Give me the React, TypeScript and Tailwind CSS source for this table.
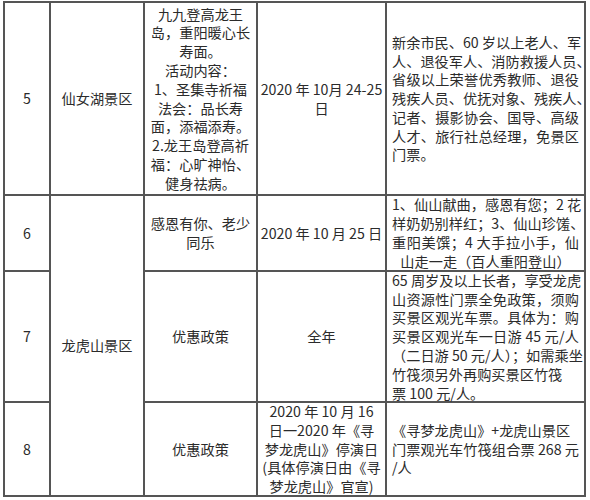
import React from "react";

type Line = { t: string; j?: boolean };

const cell = "bg-white flex flex-col justify-center";
const center = `${cell} items-center text-center`;
const left = `${cell} px-[5px] text-left`;

function Lines({ lines }: { lines: Line[] }) {
  return (
    <>
      {lines.map((l, i) => (
        <div
          key={i}
          className={`whitespace-nowrap ${l.j ? "[text-align-last:justify]" : ""}`}
        >
          {l.t}
        </div>
      ))}
    </>
  );
}

const row5Event: Line[] = [
  { t: "九九登高龙王" },
  { t: "岛，重阳暖心长" },
  { t: "寿面。" },
  { t: "活动内容：" },
  { t: "1、圣集寺祈福" },
  { t: "法会：品长寿" },
  { t: "面，添福添寿。" },
  { t: "2.龙王岛登高祈" },
  { t: "福：心旷神怡、" },
  { t: "健身祛病。" },
];

const row5Who: Line[] = [
  { t: "新余市民、60 岁以上老人、军", j: true },
  { t: "人、退役军人、消防救援人员、", j: true },
  { t: "省级以上荣誉优秀教师、退役", j: true },
  { t: "残疾人员、优抚对象、残疾人、", j: true },
  { t: "记者、摄影协会、国导、高级", j: true },
  { t: "人才、旅行社总经理，免景区", j: true },
  { t: "门票。" },
];

const row6Who: Line[] = [
  { t: "1、仙山献曲，感恩有您；2 花", j: true },
  { t: "样奶奶别样红；3、仙山珍馐、", j: true },
  { t: "重阳美馔；4 大手拉小手，仙", j: true },
  { t: "山走一走（百人重阳登山）" },
];

const row7Who: Line[] = [
  { t: "65 周岁及以上长者，享受龙虎", j: true },
  { t: "山资源性门票全免政策，须购", j: true },
  { t: "买景区观光车票。具体为：购", j: true },
  { t: "买景区观光车一日游 45 元/人", j: true },
  { t: "（二日游 50 元/人）；如需乘坐", j: true },
  { t: "竹筏须另外再购买景区竹筏" },
  { t: "票 100 元/人。" },
];

const row8Date: Line[] = [
  { t: "2020 年 10 月 16" },
  { t: "日一2020 年《寻" },
  { t: "梦龙虎山》停演日" },
  { t: "(具体停演日由《寻" },
  { t: "梦龙虎山》官宣)" },
];

const row8Who: Line[] = [
  { t: "《寻梦龙虎山》+龙虎山景区" },
  { t: "门票观光车竹筏组合票 268 元", j: true },
  { t: "/人" },
];

export default function App() {
  return (
    <div
      className="w-[590px] h-[500px] bg-white pt-[1px] pl-[3px] text-[14.2px] leading-[18.8px] text-[#2b2b2b]"
      style={{ fontFamily: '"Noto Sans CJK SC", "Noto Sans", sans-serif' }}
    >
      <div className="grid w-[583px] grid-cols-[44px_92px_111px_127px_197px] grid-rows-[191px_74px_129px_92px] gap-[2px] bg-[#555555] p-[2px]">
        {/* row 5 */}
        <div className={center}>5</div>
        <div className={center}>仙女湖景区</div>
        <div className={center}>
          <Lines lines={row5Event} />
        </div>
        <div className={center}>
          <div>2020 年 10月 24-25</div>
          <div>日</div>
        </div>
        <div className={left}>
          <Lines lines={row5Who} />
        </div>

        {/* row 6 */}
        <div className={center}>6</div>
        <div className={`${center} row-span-3`}>龙虎山景区</div>
        <div className={center}>
          <div>感恩有你、老少</div>
          <div>同乐</div>
        </div>
        <div className={center}>2020 年 10 月 25 日</div>
        <div className={`${cell} px-[5px] text-center`}>
          <Lines lines={row6Who} />
        </div>

        {/* row 7 */}
        <div className={center}>7</div>
        <div className={center}>优惠政策</div>
        <div className={center}>全年</div>
        <div className={left}>
          <Lines lines={row7Who} />
        </div>

        {/* row 8 */}
        <div className={center}>8</div>
        <div className={center}>优惠政策</div>
        <div className={center}>
          <Lines lines={row8Date} />
        </div>
        <div className={left}>
          <Lines lines={row8Who} />
        </div>
      </div>
    </div>
  );
}
